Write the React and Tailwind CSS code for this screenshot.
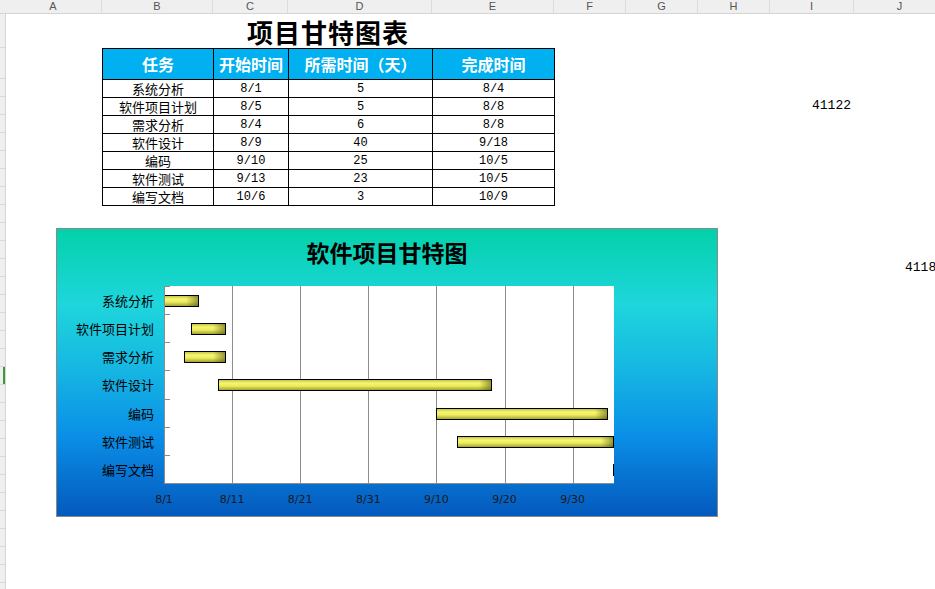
import React from 'react';

// 列宽（像素），与表格软件的列头一一对应
const columns = [
  { letter: 'A', cls: 'w-[97px]' },
  { letter: 'B', cls: 'w-[111px]' },
  { letter: 'C', cls: 'w-[75px]' },
  { letter: 'D', cls: 'w-[144px]' },
  { letter: 'E', cls: 'w-[122px]' },
  { letter: 'F', cls: 'w-[72px]' },
  { letter: 'G', cls: 'w-[72px]' },
  { letter: 'H', cls: 'w-[72px]' },
  { letter: 'I', cls: 'w-[84px]' },
  { letter: 'J', cls: 'w-[92px]' },
];

const tasks = [
  { name: '系统分析', start: '8/1', days: '5', end: '8/4', offset: 0, len: 5 },
  { name: '软件项目计划', start: '8/5', days: '5', end: '8/8', offset: 4, len: 5 },
  { name: '需求分析', start: '8/4', days: '6', end: '8/8', offset: 3, len: 6 },
  { name: '软件设计', start: '8/9', days: '40', end: '9/18', offset: 8, len: 40 },
  { name: '编码', start: '9/10', days: '25', end: '10/5', offset: 40, len: 25 },
  { name: '软件测试', start: '9/13', days: '23', end: '10/5', offset: 43, len: 23 },
  { name: '编写文档', start: '10/6', days: '3', end: '10/9', offset: 66, len: 3 },
];

const axisLabels = ['8/1', '8/11', '8/21', '8/31', '9/10', '9/20', '9/30'];
const DAY = 6.81;
const BAND = 197 / 7;

const mono = "font-['Liberation_Mono','Noto_Sans_CJK_SC',monospace]";

const GanttChart = () => {
  return (
    <div className="absolute left-[56px] top-[228px] w-[662px] h-[289px] border border-[#8a8a8a] bg-[linear-gradient(180deg,#03d1a9_0%,#1ed6dc_26%,#16b8e2_48%,#0a8fe7_72%,#0459bd_100%)] flex flex-col">
      <div className="h-[57px] pt-[10px] text-center text-[23px] leading-[26px] font-bold text-black">
        软件项目甘特图
      </div>
      <div className="flex h-[198px]">
        <div className="w-[107px] flex flex-col">
          {tasks.map((t) => (
            <div key={t.name} className="flex-1 flex items-center justify-end pr-[10px] text-[13px] leading-none text-black">
              {t.name}
            </div>
          ))}
        </div>
        <div className="relative w-[450px] bg-white border-l border-b border-[#8c8c8c] overflow-hidden">
          {[1, 2, 3, 4, 5, 6].map((i) => (
            <div key={i} className="absolute top-0 bottom-0 w-px bg-[#8c8c8c]" style={{ left: 68.1 * i - 1 }} />
          ))}
          {[0, 1, 2, 3, 4, 5, 6].map((i) => (
            <div key={i} className="absolute left-0 w-[5px] h-px bg-[#8c8c8c]" style={{ top: BAND * i }} />
          ))}
          {tasks.map((t, i) => (
            <div
              key={t.name}
              className="absolute h-[12px] border border-black bg-[linear-gradient(90deg,transparent_calc(100%-12px),rgba(80,80,10,0.55)),linear-gradient(180deg,#c4c446_0%,#f6f676_30%,#ecec5c_60%,#a2a234_100%)]"
              style={{
                top: BAND * i + 9,
                left: Math.min(t.offset * DAY - 1, 448),
                width: t.len * DAY + 1,
              }}
            />
          ))}
        </div>
      </div>
      <div className="relative flex-1">
        {axisLabels.map((l, i) => (
          <span
            key={l}
            className="absolute top-[10px] -translate-x-1/2 text-[11px] leading-[12px] text-[#1a1a1a] font-['DejaVu_Sans',sans-serif]"
            style={{ left: 107 + 68.1 * i }}
          >
            {l}
          </span>
        ))}
      </div>
    </div>
  );
};

const App = () => {
  const leftRows = Array.from({ length: 29 });

  return (
    <div className="relative w-[935px] h-[589px] overflow-hidden bg-white font-['Noto_Sans_CJK_SC',sans-serif]">
      {/* 列头 */}
      <div className="flex h-[14px] bg-[#efefef] border-b border-[#d4d4d4]">
        <div className="w-[5px] shrink-0" />
        {columns.map((c) => (
          <div key={c.letter} className={`${c.cls} shrink-0 border-r border-[#dcdcdc] text-center text-[11px] leading-[13px] text-[#555] font-['Liberation_Sans',sans-serif]`}>
            {c.letter}
          </div>
        ))}
      </div>

      <div className="flex">
        {/* 行头 */}
        <div className="w-[6px] shrink-0 bg-[#efefef] border-r border-[#d4d4d4]">
          <div className="h-[34px] border-b border-[#d9d9d9]" />
          <div className="h-[31px] border-b border-[#d9d9d9]" />
          {leftRows.map((_, i) => (
            <div key={i} className="h-[18px] border-b border-[#d9d9d9] flex justify-end">
              {i === 16 && <div className="w-[2px] h-full bg-[#3f9a3f]" />}
            </div>
          ))}
        </div>

        {/* 工作表 */}
        <div className="grid grid-cols-[96px_111px_75px_144px_122px_72px_72px_72px_84px_92px] grid-rows-[34px_31px_repeat(28,18px)] shrink-0">
          <div className="col-start-2 col-span-4 row-start-1 pt-[4px] text-center text-[26px] leading-[28px] font-bold tracking-[1px] text-black">
            项目甘特图表
          </div>

          <div className="col-start-2 col-span-4 row-start-2 row-span-8">
            <table className="w-full table-fixed border-collapse">
              <colgroup>
                <col className="w-[111px]" />
                <col className="w-[75px]" />
                <col className="w-[144px]" />
                <col className="w-[122px]" />
              </colgroup>
              <thead>
                <tr className="h-[31px] bg-[#00b0f0] text-white text-[16px] font-bold">
                  <th className="border border-black font-bold">任务</th>
                  <th className="border border-black font-bold">开始时间</th>
                  <th className="border border-black font-bold">所需时间（天）</th>
                  <th className="border border-black font-bold">完成时间</th>
                </tr>
              </thead>
              <tbody>
                {tasks.map((t) => (
                  <tr key={t.name} className="h-[18px]">
                    <td className="border border-black p-0 text-center text-[13px] leading-[16px]">{t.name}</td>
                    <td className={`border border-black p-0 text-center text-[12px] leading-[16px] ${mono}`}>{t.start}</td>
                    <td className={`border border-black p-0 text-center text-[12px] leading-[16px] ${mono}`}>{t.days}</td>
                    <td className={`border border-black p-0 text-center text-[12px] leading-[16px] ${mono}`}>{t.end}</td>
                  </tr>
                ))}
              </tbody>
            </table>
          </div>

          <div className={`col-start-9 row-start-4 text-right pr-[3px] text-[13px] leading-[18px] text-black ${mono}`}>
            41122
          </div>
          <div className={`col-start-10 row-start-13 text-right pr-[2px] text-[13px] leading-[18px] text-black ${mono}`}>
            41183
          </div>
        </div>
      </div>

      <GanttChart />
    </div>
  );
};

export default App;
